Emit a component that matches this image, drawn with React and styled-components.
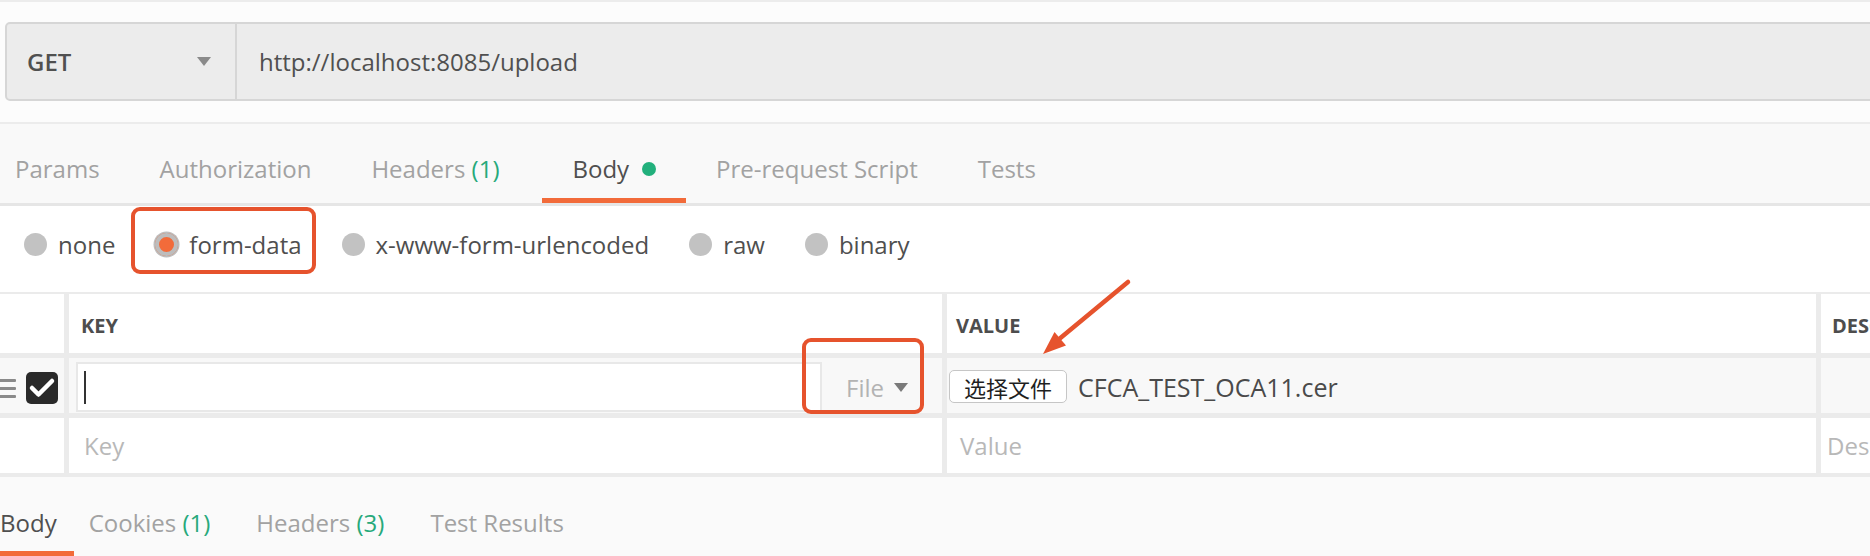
import React from 'react';
import styled, { createGlobalStyle } from 'styled-components';

const ORANGE = '#f26b3a';
const MARK = '#e6532d';
const GREEN = '#27a97b';

const GlobalStyle = createGlobalStyle`
  html, body { margin: 0; padding: 0; }
  body {
    background: #fcfcfc;
    font-family: "Open Sans", "Noto Sans CJK SC", sans-serif;
    color: #505050;
    overflow: hidden;
  }
  *, *::before, *::after { box-sizing: border-box; }
`;

const Page = styled.div`
  width: 1870px;
  height: 556px;
  overflow: hidden;
  border-top: 2px solid #ececec;
  display: flex;
  flex-direction: column;
  background: #fcfcfc;
`;

/* ---------- URL bar ---------- */
const UrlSection = styled.div`
  padding: 20px 0 21px 5px;
`;

const UrlBar = styled.div`
  display: flex;
  height: 79px;
  margin-right: -20px;
  background: #ececec;
  border: 2px solid #d6d6d6;
  border-radius: 5px;
`;

const MethodSelect = styled.div`
  flex: 0 0 230px;
  display: flex;
  align-items: center;
  justify-content: space-between;
  padding: 0 24px 0 20px;
  border-right: 2px solid #d6d6d6;
  font-size: 24px;
  font-weight: 600;
  color: #505050;
`;

const Caret = styled.span`
  width: 0;
  height: 0;
  border-left: ${p => p.$w / 2}px solid transparent;
  border-right: ${p => p.$w / 2}px solid transparent;
  border-top: ${p => p.$h}px solid ${p => p.$color};
`;

const UrlText = styled.div`
  display: flex;
  align-items: center;
  padding-left: 22px;
  font-size: 24px;
  color: #505050;
`;

/* ---------- Tabs ---------- */
const RequestTabBar = styled.div`
  display: flex;
  height: 84px;
  background: #f9f9f9;
  border-top: 2px solid #ececec;
  border-bottom: 3px solid #e6e6e6;
  margin-left: -15px;
`;

const ResponseTabBar = styled.div`
  display: flex;
  flex: 1;
  gap: 12px;
  background: #fafafa;
  margin-left: -17px;
`;

const Tab = styled.div`
  display: flex;
  align-items: center;
  gap: 13px;
  margin-left: ${p => p.$offset || 0}px;
  padding: ${p => p.$padTop}px ${p => p.$padX}px 0;
  font-size: 24px;
  white-space: nowrap;
  color: ${p => (p.$active ? '#4f4f4f' : '#a2a2a2')};
  box-shadow: ${p => (p.$active ? `inset 0 -5px 0 ${ORANGE}` : 'none')};
`;

const Count = styled.span`
  color: ${GREEN};
`;

const Dot = styled.span`
  width: 14px;
  height: 14px;
  border-radius: 50%;
  background: #22b07c;
`;

/* ---------- Body type radios ---------- */
const BodyTypeRow = styled.div`
  display: flex;
  align-items: center;
  gap: 40px;
  height: 86px;
  padding: 0 0 10px 24px;
  background: #ffffff;
`;

const RadioItem = styled.label`
  position: relative;
  display: flex;
  align-items: center;
  gap: 11px;
  font-size: 24px;
  color: #4f4f4f;
`;

const Radio = styled.span`
  width: 23px;
  height: 23px;
  border-radius: 50%;
  background: ${p => (p.$checked ? ORANGE : '#c2c2c2')};
  box-shadow: ${p => (p.$checked ? 'inset 0 0 0 4px #bdbdbd, 0 0 0 1.5px #bdbdbd' : 'none')};
`;

const AnnotationBox = styled.span`
  position: absolute;
  inset: ${p => p.$inset};
  border: 4px solid ${MARK};
  border-radius: 9px;
  pointer-events: none;
`;

/* ---------- Params table ---------- */
const Table = styled.div`
  display: grid;
  grid-template-columns: 64px 873px 869px 1fr;
  grid-template-rows: 59px 55px 55px;
  gap: 5px;
  background: #ebebeb;
  border-top: 2px solid #ebebeb;
  border-bottom: 4px solid #ebebeb;
`;

const HeadCell = styled.div`
  display: flex;
  align-items: center;
  padding: 3px 0 0 ${p => p.$pad || 0}px;
  background: #ffffff;
  font-size: 20px;
  font-weight: 700;
  color: #4d4d4d;
  white-space: nowrap;
  overflow: hidden;
`;

const RowCell = styled.div`
  position: relative;
  display: flex;
  align-items: center;
  padding: ${p => p.$pad || '0'};
  background: ${p => (p.$shade ? '#f8f8f8' : '#ffffff')};
  gap: ${p => p.$gap || 0}px;
`;

const Handle = styled.svg`
  margin-left: -4px;
  flex: 0 0 auto;
`;

const CheckBox = styled.span`
  display: flex;
  align-items: center;
  justify-content: center;
  width: 32px;
  height: 32px;
  border-radius: 5px;
  background: #2a2a2a;
`;

const KeyInput = styled.div`
  flex: 1;
  align-self: stretch;
  display: flex;
  align-items: center;
  background: #ffffff;
  border: 2px solid #e8e8e8;
`;

const TextCursor = styled.span`
  width: 2px;
  height: 33px;
  margin-left: 6px;
  background: #333333;
`;

const TypeSelect = styled.div`
  position: relative;
  flex: 0 0 120px;
  align-self: stretch;
  display: flex;
  align-items: center;
  gap: 10px;
  padding-left: 24px;
  font-size: 24px;
  color: #b3b3b3;
`;

const FileButton = styled.span`
  display: flex;
  align-items: center;
  height: 33px;
  padding: 0 14px;
  background: #ffffff;
  border: 1px solid #c6c6c6;
  border-radius: 5px;
  font-family: "Noto Sans CJK SC", sans-serif;
  font-size: 22px;
  color: #1f1f1f;
`;

const FileName = styled.span`
  margin-left: 11px;
  font-size: 25px;
  color: #4a4a4a;
`;

const Placeholder = styled.span`
  font-size: 24px;
  color: #b8b8b8;
  white-space: nowrap;
`;

const ArrowOverlay = styled.svg`
  position: absolute;
  left: 93px;
  top: -80px;
  overflow: visible;
  pointer-events: none;
`;

/* ---------- Response ---------- */
const ResponseSection = styled.div`
  display: flex;
  flex: 1;
  background: #fafafa;
`;

const requestTabs = [
  { label: 'Params' },
  { label: 'Authorization' },
  { label: 'Headers', count: 1 },
  { label: 'Body', active: true, dot: true, offset: 13 },
  { label: 'Pre-request Script' },
  { label: 'Tests' },
];

const responseTabs = [
  { label: 'Body', active: true },
  { label: 'Cookies', count: 1, offset: -14 },
  { label: 'Headers', count: 3 },
  { label: 'Test Results' },
];

const bodyTypes = [
  { label: 'none' },
  { label: 'form-data', checked: true, annotated: true },
  { label: 'x-www-form-urlencoded' },
  { label: 'raw' },
  { label: 'binary' },
];

function TabLabel({ tab }) {
  return (
    <>
      <span>
        {tab.label}
        {tab.count != null && (
          <>
            {' '}
            <Count>({tab.count})</Count>
          </>
        )}
      </span>
      {tab.dot && <Dot />}
    </>
  );
}

export default function App() {
  return (
    <>
      <GlobalStyle />
      <Page>
        <UrlSection>
          <UrlBar>
            <MethodSelect>
              <span>GET</span>
              <Caret $w={14} $h={9} $color="#8a8a8a" />
            </MethodSelect>
            <UrlText>http://localhost:8085/upload</UrlText>
          </UrlBar>
        </UrlSection>

        <RequestTabBar>
          {requestTabs.map(t => (
            <Tab key={t.label} $active={t.active} $offset={t.offset} $padTop={10} $padX={30}>
              <TabLabel tab={t} />
            </Tab>
          ))}
        </RequestTabBar>

        <BodyTypeRow>
          {bodyTypes.map(b => (
            <RadioItem key={b.label}>
              <Radio $checked={b.checked} />
              {b.label}
              {b.annotated && <AnnotationBox $inset="-21px -14px -13px -24px" />}
            </RadioItem>
          ))}
        </BodyTypeRow>

        <Table>
          <HeadCell />
          <HeadCell $pad={12}>KEY</HeadCell>
          <HeadCell $pad={9}>VALUE</HeadCell>
          <HeadCell $pad={11}>DESCRIPTION</HeadCell>

          <RowCell $shade $pad="5px 0 0 0" $gap={10}>
            <Handle width="20" height="20" viewBox="0 0 20 20">
              <rect x="0" y="1" width="20" height="3" rx="1" fill="#8a8a8a" />
              <rect x="0" y="9" width="20" height="3" rx="1" fill="#8a8a8a" />
              <rect x="0" y="17" width="20" height="3" rx="1" fill="#8a8a8a" />
            </Handle>
            <CheckBox>
              <svg width="32" height="32" viewBox="0 0 32 32">
                <polyline
                  points="6,16 12.5,22.5 26,9"
                  fill="none"
                  stroke="#ffffff"
                  strokeWidth="4.5"
                  strokeLinecap="round"
                  strokeLinejoin="round"
                />
              </svg>
            </CheckBox>
          </RowCell>
          <RowCell $shade $pad="4px 0 1px 7px">
            <KeyInput>
              <TextCursor />
            </KeyInput>
            <TypeSelect>
              <span>File</span>
              <Caret $w={15} $h={9} $color="#7a7a7a" />
              <AnnotationBox $inset="-24px 18px -2px -20px" />
            </TypeSelect>
          </RowCell>
          <RowCell $shade $pad="2px 0 0 2px">
            <FileButton>选择文件</FileButton>
            <FileName>CFCA_TEST_OCA11.cer</FileName>
            <ArrowOverlay width="92" height="80" viewBox="0 0 92 80">
              <line
                x1="88"
                y1="4"
                x2="18"
                y2="62"
                stroke={MARK}
                strokeWidth="4.5"
                strokeLinecap="round"
              />
              <polygon points="3,76 14.5,54 26,67.5" fill={MARK} />
            </ArrowOverlay>
          </RowCell>
          <RowCell $shade />

          <RowCell />
          <RowCell $pad="0 0 0 15px">
            <Placeholder>Key</Placeholder>
          </RowCell>
          <RowCell $pad="0 0 0 13px">
            <Placeholder>Value</Placeholder>
          </RowCell>
          <RowCell $pad="0 0 0 6px">
            <Placeholder>Description</Placeholder>
          </RowCell>
        </Table>

        <ResponseSection>
          <ResponseTabBar>
            {responseTabs.map(t => (
              <Tab key={t.label} $active={t.active} $offset={t.offset} $padTop={12} $padX={17}>
                <TabLabel tab={t} />
              </Tab>
            ))}
          </ResponseTabBar>
        </ResponseSection>
      </Page>
    </>
  );
}
